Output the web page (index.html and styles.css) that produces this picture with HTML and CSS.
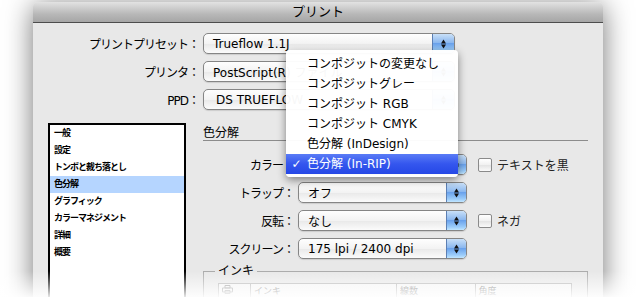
FILE: index.html
```html
<!DOCTYPE html>
<html lang="ja">
<head>
    <meta charset="UTF-8">
    <title>プリント</title>
    <link rel="stylesheet" href="styles.css">
</head>
<body>
    <div class="window">
        <div class="titlebar">プリント</div>
        <div class="content">
            <div class="presets">
                <span class="label">プリントプリセット：</span>
                <div class="popup"><span class="value">Trueflow 1.1J</span><span class="stepper"><svg width="7" height="12" viewBox="0 0 7 12"><path d="M3.5 1.5L6 5.5H1Z M1 6.5H6L3.5 10.5Z"/></svg></span></div>

                <span class="label">プリンタ：</span>
                <div class="popup"><span class="value">PostScript(R) ファイル</span><span class="stepper"><svg width="7" height="12" viewBox="0 0 7 12"><path d="M3.5 1.5L6 5.5H1Z M1 6.5H6L3.5 10.5Z"/></svg></span></div>

                <span class="label">PPD：</span>
                <div class="popup"><span class="value indent">DS TRUEFLOW</span><span class="stepper"><svg width="7" height="12" viewBox="0 0 7 12"><path d="M3.5 1.5L6 5.5H1Z M1 6.5H6L3.5 10.5Z"/></svg></span></div>
            </div>

            <div class="main">
                <ul class="sidebar">
                    <li>一般</li>
                    <li>設定</li>
                    <li>トンボと裁ち落とし</li>
                    <li class="active">色分解</li>
                    <li>グラフィック</li>
                    <li>カラーマネジメント</li>
                    <li>詳細</li>
                    <li>概要</li>
                </ul>

                <div class="panel">
                    <div class="section-title">色分解</div>

                    <div class="options">
                        <span class="label">カラー：</span>
                        <!-- value is covered by the open menu -->
                        <div class="popup"><span class="value"></span><span class="stepper"><svg width="7" height="12" viewBox="0 0 7 12"><path d="M3.5 1.5L6 5.5H1Z M1 6.5H6L3.5 10.5Z"/></svg></span></div>
                        <label class="check"><span class="box"></span>テキストを黒</label>

                        <span class="label">トラップ：</span>
                        <div class="popup"><span class="value">オフ</span><span class="stepper"><svg width="7" height="12" viewBox="0 0 7 12"><path d="M3.5 1.5L6 5.5H1Z M1 6.5H6L3.5 10.5Z"/></svg></span></div>
                        <span></span>

                        <span class="label">反転：</span>
                        <div class="popup"><span class="value">なし</span><span class="stepper"><svg width="7" height="12" viewBox="0 0 7 12"><path d="M3.5 1.5L6 5.5H1Z M1 6.5H6L3.5 10.5Z"/></svg></span></div>
                        <label class="check"><span class="box"></span>ネガ</label>

                        <span class="label">スクリーン：</span>
                        <div class="popup"><span class="value">175 lpi / 2400 dpi</span><span class="stepper"><svg width="7" height="12" viewBox="0 0 7 12"><path d="M3.5 1.5L6 5.5H1Z M1 6.5H6L3.5 10.5Z"/></svg></span></div>
                        <span></span>
                    </div>

                    <fieldset class="inks">
                        <legend>インキ</legend>
                        <table>
                            <tr>
                                <th class="col-icon"><svg width="11" height="9" viewBox="0 0 11 9"><path d="M3 0.5H8V3H3Z M0.5 3H10.5V7H0.5Z M3 5.5H8V8.5H3Z" fill="#f4f4f4" stroke="#999"/></svg></th>
                                <th class="col-name">インキ</th>
                                <th class="col-freq">線数</th>
                                <th class="col-angle">角度</th>
                            </tr>
                        </table>
                    </fieldset>
                </div>
            </div>
        </div>
    </div>

    <!-- open pop-up menu for カラー -->
    <ul class="menu">
        <li><span class="mark"></span>コンポジットの変更なし</li>
        <li><span class="mark"></span>コンポジットグレー</li>
        <li><span class="mark"></span>コンポジット RGB</li>
        <li><span class="mark"></span>コンポジット CMYK</li>
        <li><span class="mark"></span>色分解 (InDesign)</li>
        <li class="selected"><span class="mark">✓</span>色分解 (In-RIP)</li>
    </ul>

    <div class="fade"></div>
</body>
</html>
```

FILE: styles.css
```css
body {
    margin: 0;
    width: 637px;
    height: 297px;
    overflow: hidden;
    position: relative;
    background-color: #fff;
    font-family: "DejaVu Sans", "Noto Sans CJK JP", sans-serif;
    font-size: 12px;
    color: #000;
}

.window {
    margin: 2px 0 0 33px;
    width: 570px;
    height: 340px;
    background-color: #e8e8e8;
    border-radius: 5px 5px 0 0;
    box-shadow: 0 4px 28px rgba(0, 0, 0, 0.55);
}

.titlebar {
    height: 20px;
    line-height: 20px;
    text-align: center;
    font-size: 13px;
    border-bottom: 1px solid #4d4d4d;
    border-radius: 5px 5px 0 0;
    background: linear-gradient(#e2e2e2, #b8b8b8 60%, #a6a6a6);
}

.content {
    padding: 10px 0 0 15px;
}

.presets {
    display: grid;
    grid-template-columns: 151px 252px;
    column-gap: 4px;
    row-gap: 7px;
    align-items: center;
}

.label {
    text-align: right;
    letter-spacing: -1px;
    white-space: nowrap;
}

/* aqua pop-up button */
.popup {
    height: 19px;
    display: flex;
    align-items: center;
    border: 1px solid #858585;
    border-radius: 5px;
    background: linear-gradient(#fefefe, #f3f3f3 50%, #e9e9e9 52%, #fbfbfb);
    box-shadow: 0 1px 1px rgba(0, 0, 0, 0.12);
    overflow: hidden;
}

.popup .value {
    flex: 1;
    padding-left: 9px;
    white-space: nowrap;
    overflow: hidden;
}

.popup .value.indent {
    padding-left: 12px;
}

.stepper {
    width: 21px;
    height: 100%;
    display: flex;
    align-items: center;
    justify-content: center;
    border-left: 1px solid #5c7fb3;
    background: linear-gradient(#c9e0f8, #8cb8ef 45%, #6aa2ec 50%, #9ccdfa 85%, #c2e6ff);
}

.stepper svg {
    fill: #111;
}

.main {
    display: flex;
    margin-top: 13px;
}

.sidebar {
    width: 134px;
    height: 200px;
    margin: 0;
    padding: 0;
    list-style: none;
    border: 2px solid #000;
    background-color: #fff;
}

.sidebar li {
    height: 17px;
    line-height: 17px;
    padding-left: 4px;
    font-size: 9px;
    font-weight: bold;
    letter-spacing: -1px;
    white-space: nowrap;
}

.sidebar li.active {
    background-color: #b5d5ff;
}

.panel {
    margin-left: 17px;
    width: 385px;
}

.section-title {
    padding-top: 3px;
    height: 14px;
    line-height: 14px;
    border-bottom: 1px solid #8c8c8c;
}

.options {
    display: grid;
    grid-template-columns: 91px 169px auto;
    column-gap: 4px;
    row-gap: 7px;
    align-items: center;
    margin-top: 13px;
}

.options .stepper {
    width: 19px;
}

.check {
    display: flex;
    align-items: center;
    gap: 5px;
    margin-left: 7px;
    color: #222;
}

.check .box {
    width: 12px;
    height: 12px;
    border: 1px solid #8a8a8a;
    border-radius: 2px;
    background: linear-gradient(#fff, #f0f0f0 50%, #e4e4e4 52%, #fafafa);
}

.inks {
    margin: 5px 0 0;
    padding: 0 15px 20px 11px;
    border: 1px solid #ababab;
}

.inks legend {
    padding: 0 3px;
    line-height: 14px;
}

.inks table {
    margin: 5px 0 0 3px;
    border-collapse: collapse;
}

.inks th {
    height: 12px;
    padding: 0 0 0 3px;
    border: 1px solid #b3b3b3;
    font-size: 9px;
    font-weight: normal;
    color: #777;
    text-align: left;
    background-color: #f4f4f4;
}

.col-icon { width: 28px; text-align: center; }
.col-name { width: 143px; }
.col-freq { width: 75px; }
.col-angle { width: 93px; }

/* open menu */
.menu {
    position: absolute;
    left: 286px;
    top: 50px;
    width: 172px;
    margin: 0;
    padding: 4px 0 3px;
    list-style: none;
    background-color: rgba(255, 255, 255, 0.97);
    border-radius: 4px;
    box-shadow: 0 3px 9px rgba(0, 0, 0, 0.45);
}

.menu li {
    display: flex;
    height: 20px;
    line-height: 20px;
    white-space: nowrap;
}

.menu .mark {
    width: 21px;
    text-align: center;
}

.menu li.selected {
    color: #fff;
    background: linear-gradient(#5a7cf6, #3456ee 50%, #2548e6);
}

.fade {
    position: absolute;
    left: 0;
    right: 0;
    bottom: 0;
    height: 26px;
    background: linear-gradient(rgba(255, 255, 255, 0), rgba(255, 255, 255, 0.9));
}
```
